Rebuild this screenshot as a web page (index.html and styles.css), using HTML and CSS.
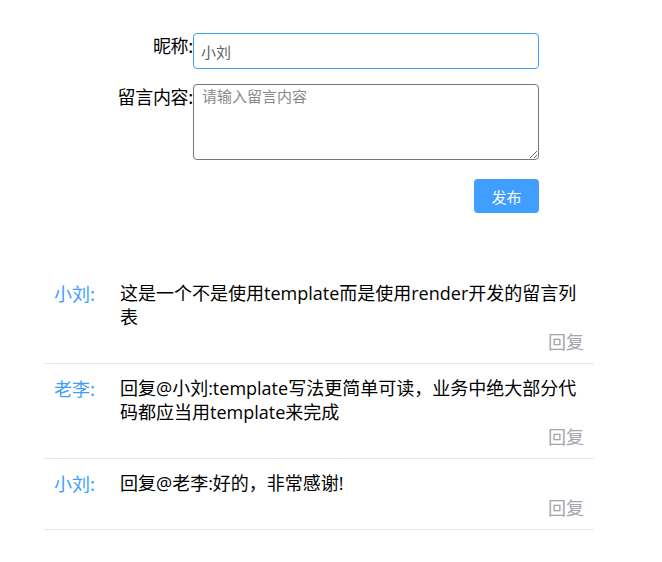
FILE: index.html
```html
<!DOCTYPE html>
<html lang="zh">
<head>
<meta charset="utf-8">
<title>留言板</title>
<link rel="stylesheet" href="styles.css">
</head>
<body>
<div class="page">
  <form class="form">
    <div class="row">
      <label class="label">昵称:</label>
      <input class="input" type="text" value="小刘">
    </div>
    <div class="row row-area">
      <label class="label">留言内容:</label>
      <textarea class="textarea" placeholder="请输入留言内容"></textarea>
    </div>
    <div class="row row-btn">
      <button type="button" class="btn">发布</button>
    </div>
  </form>
  <ul class="list">
    <li class="item">
      <div class="main">
        <span class="name">小刘:</span>
        <span class="text">这是一个不是使用template而是使用render开发的留言列表</span>
      </div>
      <div class="reply">回复</div>
    </li>
    <li class="item">
      <div class="main">
        <span class="name">老李:</span>
        <span class="text">回复@小刘:template写法更简单可读，业务中绝大部分代码都应当用template来完成</span>
      </div>
      <div class="reply">回复</div>
    </li>
    <li class="item">
      <div class="main">
        <span class="name">小刘:</span>
        <span class="text">回复@老李:好的，非常感谢!</span>
      </div>
      <div class="reply">回复</div>
    </li>
  </ul>
</div>
</body>
</html>
```
FILE: styles.css
```css
* { box-sizing: border-box; }
html, body { margin: 0; padding: 0; background: #fff; }
body {
  font-family: "Open Sans", "Noto Sans CJK SC", sans-serif;
  color: #000;
}
.page {
  width: 550px;
  margin-left: 44px;
  padding-top: 33px;
}
.form {
  padding-left: 69px;
  width: 495px;
}
.row {
  display: flex;
  align-items: flex-start;
}
.row-area { margin-top: 15px; }
.row-btn { margin-top: 19px; justify-content: flex-end; }
.label {
  width: 80px;
  flex: none;
  text-align: right;
  font-size: 18px;
  line-height: 24px;
  color: #000;
  font-family: "Noto Sans CJK SC", sans-serif;
  letter-spacing: -0.3px;
}
.input {
  flex: 1;
  height: 36px;
  border: 1px solid #409eff;
  border-radius: 4px;
  padding: 0 7px;
  font-size: 15px;
  color: #606266;
  font-family: "Noto Sans CJK SC", sans-serif;
  outline: none;
}
.textarea {
  flex: 1;
  height: 76px;
  border: 1px solid #767676;
  border-radius: 4px;
  padding: 0 8px;
  font-size: 15px;
  line-height: 22px;
  color: #606266;
  font-family: "Noto Sans CJK SC", sans-serif;
  resize: both;
  outline: none;
}
.textarea::placeholder { color: #8a8a8a; }
.btn {
  width: 65px;
  height: 34px;
  border: none;
  border-radius: 4px;
  background: #409eff;
  color: #fff;
  font-size: 15px;
  font-family: "Noto Sans CJK SC", sans-serif;
  padding: 0;
}
.list {
  list-style: none;
  margin: 56px 0 0;
  padding: 0;
}
.item {
  padding: 12px 10px 10px 10px;
  border-bottom: 1px solid #e4e7ed;
  font-size: 18px;
  line-height: 24px;
}
.main {
  display: flex;
  align-items: flex-start;
}
.name {
  width: 66px;
  flex: none;
  color: #409eff;
  font-family: "Noto Sans CJK SC", sans-serif;
}
.text {
  flex: 1;
  color: #000;
}
.reply {
  text-align: right;
  color: #a3a6ad;
  font-family: "Noto Sans CJK SC", sans-serif;
}
```
